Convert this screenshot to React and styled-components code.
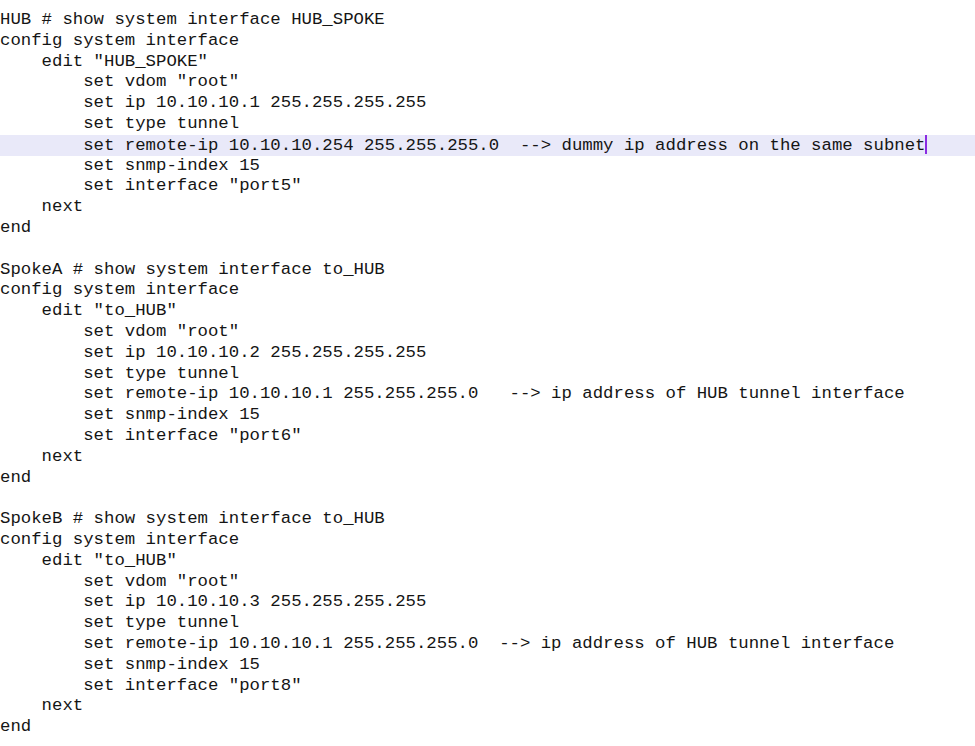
import styled, { createGlobalStyle } from 'styled-components';

const Global = createGlobalStyle`
    html, body {
        margin: 0;
        padding: 0;
        background: #ffffff;
    }
`;

const Editor = styled.div`
    width: 975px;
    height: 746px;
    overflow: hidden;
    padding-top: 10px;
    box-sizing: border-box;
    font-family: "Liberation Mono", "Courier New", monospace;
    font-size: 17.33px;
    line-height: 20.8px;
    color: #151515;
`;

const Line = styled.div`
    height: 20.8px;
    white-space: pre;
    background: ${(p) => (p.$active ? '#e9e9f9' : 'transparent')};
`;

const Caret = styled.span`
    display: inline-block;
    width: 2px;
    height: 19px;
    vertical-align: -4px;
    background: #8a2be2;
`;

const blocks = [
    {
        host: 'HUB',
        name: 'HUB_SPOKE',
        ip: '10.10.10.1 255.255.255.255',
        remote: '10.10.10.254 255.255.255.0  --> dummy ip address on the same subnet',
        port: 'port5',
        active: true,
    },
    {
        host: 'SpokeA',
        name: 'to_HUB',
        ip: '10.10.10.2 255.255.255.255',
        remote: '10.10.10.1 255.255.255.0   --> ip address of HUB tunnel interface',
        port: 'port6',
    },
    {
        host: 'SpokeB',
        name: 'to_HUB',
        ip: '10.10.10.3 255.255.255.255',
        remote: '10.10.10.1 255.255.255.0  --> ip address of HUB tunnel interface',
        port: 'port8',
    },
];

const App = () => {
    return (
        <>
            <Global />
            <Editor>
                {blocks.map((b, i) => (
                    <div key={b.host}>
                        {i > 0 && <Line> </Line>}
                        <Line>{`${b.host} # show system interface ${b.name}`}</Line>
                        <Line>config system interface</Line>
                        <Line>{`    edit "${b.name}"`}</Line>
                        <Line>{'        set vdom "root"'}</Line>
                        <Line>{`        set ip ${b.ip}`}</Line>
                        <Line>{'        set type tunnel'}</Line>
                        <Line $active={b.active}>
                            {`        set remote-ip ${b.remote}`}
                            {b.active && <Caret />}
                        </Line>
                        <Line>{'        set snmp-index 15'}</Line>
                        <Line>{`        set interface "${b.port}"`}</Line>
                        <Line>{'    next'}</Line>
                        <Line>end</Line>
                    </div>
                ))}
            </Editor>
        </>
    );
};

export default App;
